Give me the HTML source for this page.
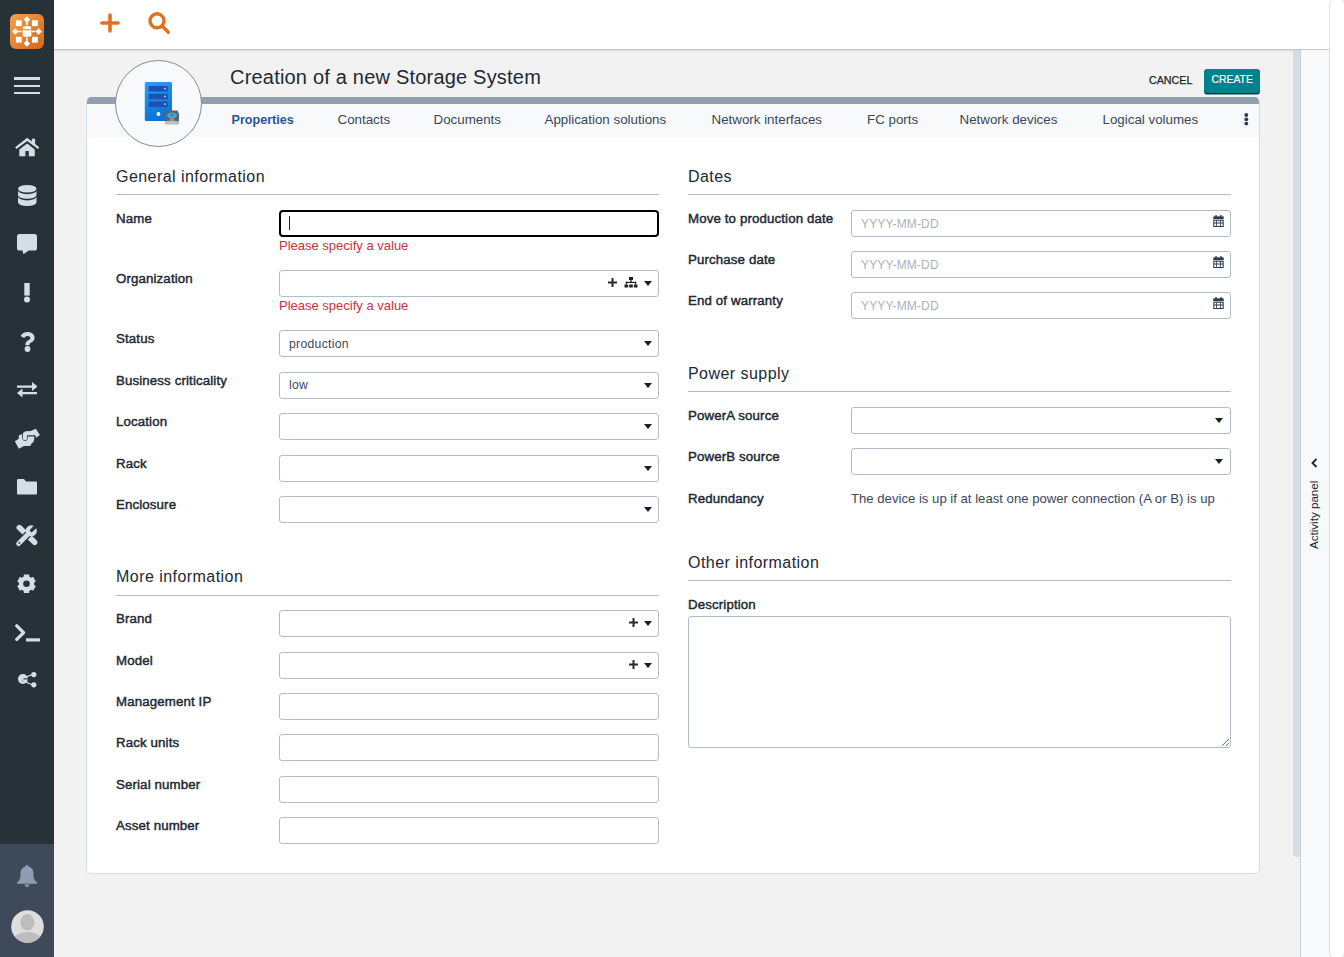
<!DOCTYPE html><html><head><meta charset="utf-8"><style>
*{box-sizing:border-box;margin:0;padding:0}
html,body{width:1344px;height:957px;overflow:hidden;background:#f2f2f2;font-family:"Liberation Sans",sans-serif;color:#212934}
.a{position:absolute}
.sb{left:0;top:0;width:54px;height:957px;background:#263238}
.sbb{left:0;top:844px;width:54px;height:113px;background:#3e4a59}
.top{left:54px;top:0;width:1276px;height:50px;background:#fff;border-bottom:1px solid #c4c4c4;box-shadow:0 1px 2px rgba(0,0,0,.10)}
.card{left:86px;top:97px;width:1174px;height:777px;background:#fff;border:1px solid #d6dde4;border-top:0;border-radius:5px;overflow:hidden}
.strip{left:0;top:0;width:100%;height:7px;background:#929fb1}
.tabbar{left:0;top:7px;width:100%;height:33px;background:#f8f9fa}
.circle{left:115px;top:60px;width:87px;height:87px;border-radius:50%;background:#f8f9fa;border:1px solid #7d8f99}
.title{left:230px;top:64px;font-size:20px;line-height:26px;color:#212934;letter-spacing:0.2px;white-space:nowrap}
.tab{top:112px;font-size:13.35px;line-height:16px;color:#39475a;white-space:nowrap}
.h{font-size:16px;letter-spacing:0.45px;line-height:20px;color:#212934;white-space:nowrap}
.hl{height:1px;background:#aebecd}
.lbl{font-size:13.25px;letter-spacing:0.14px;font-weight:normal;-webkit-text-stroke:0.45px #212934;line-height:16px;color:#212934;white-space:nowrap}
.inp{height:27px;background:#fff;border:1px solid #aebecd;border-radius:3px}
.err{font-size:13px;line-height:16px;color:#c8323c;white-space:nowrap}
.val{font-size:12.2px;letter-spacing:0.3px;line-height:16px;color:#3c4759;white-space:nowrap}
.ph{font-size:12px;letter-spacing:0.15px;line-height:16px;color:#aab1bb;white-space:nowrap}
.caret{width:0;height:0;border-left:4.5px solid transparent;border-right:4.5px solid transparent;border-top:5px solid #1b1f24}
</style></head><body><div class="a sb"></div>
<div class="a sbb"></div>
<svg class="a" style="left:10px;top:14px" width="34" height="35" viewBox="0 0 34 35">
<defs><linearGradient id="lg" x1="0" y1="0" x2="1" y2="1"><stop offset="0" stop-color="#f1a24c"/><stop offset="1" stop-color="#d5651e"/></linearGradient></defs>
<rect x="0" y="0" width="34" height="35" rx="6" fill="url(#lg)"/>
<g fill="#fff">
<path d="M16.85 2.2 L20.05 5.5 L16.85 8.8 L13.65 5.5 Z"/><rect x="16.1" y="8" width="1.5" height="3"/>
<path d="M16.85 26.1 L20.05 29.4 L16.85 32.7 L13.65 29.4 Z"/><rect x="16.1" y="23.5" width="1.5" height="3"/>
<path d="M2.15 17.5 L5.35 14.2 L8.55 17.5 L5.35 20.8 Z"/><rect x="8" y="16.8" width="3.5" height="1.4"/>
<path d="M31.8 17.5 L28.6 14.2 L25.4 17.5 L28.6 20.8 Z"/><rect x="22" y="16.8" width="3.5" height="1.4"/>
<rect x="5.9" y="6.3" width="5.8" height="5.8"/><rect x="22" y="6.3" width="5.8" height="5.8"/>
<rect x="5.9" y="22.8" width="5.8" height="5.8"/><rect x="22" y="22.8" width="5.8" height="5.8"/>
<ellipse cx="17.05" cy="13.7" rx="4.35" ry="1.6"/>
<path d="M12.7 15.6 Q17.05 17.5 21.4 15.6 V21.9 Q17.05 23.6 12.7 21.9 Z"/>
</g></svg>
<div class="a" style="left:14px;top:77px;width:26px;height:2.6px;background:#d5dde5"></div>
<div class="a" style="left:14px;top:84.7px;width:26px;height:2.4px;background:#d5dde5"></div>
<div class="a" style="left:14px;top:91.7px;width:26px;height:2.4px;background:#d5dde5"></div>
<svg class="a" style="left:0;top:131.2px" width="54" height="30" viewBox="0 130 54 30" fill="#d5dde5"><path d="M15.1 146.2 L27.2 136.8 L31.8 140.4 V137.8 H35.1 V143 L39.3 146.2 L37.9 148.1 L27.2 140.1 L16.5 148.1 Z"/><path d="M19.3 148.6 L27.2 142.4 L34.8 148.6 V155.2 H28.8 V150.1 H25.4 V155.2 H19.3 Z"/></svg>
<svg class="a" style="left:18px;top:185px" width="18.5" height="21" viewBox="0 0 18.5 21" fill="#d5dde5"><ellipse cx="9.25" cy="3.8" rx="9.25" ry="3.8"/><path d="M0 5.4 A9.25 3.8 0 0 0 18.5 5.4 V10 A9.25 3.8 0 0 1 0 10 Z"/><path d="M0 11.6 A9.25 3.8 0 0 0 18.5 11.6 V17.2 A9.25 3.8 0 0 1 0 17.2 Z"/></svg>
<svg class="a" style="left:17px;top:233.5px" width="20" height="20.5" viewBox="0 0 20 20.5" fill="#d5dde5"><path d="M2.5 0 H17.5 Q20 0 20 2.5 V14 Q20 16.6 17.5 16.6 H11.7 L6.4 20.3 L5.6 16.6 H2.5 Q0 16.6 0 14 V2.5 Q0 0 2.5 0 Z"/></svg>
<svg class="a" style="left:23px;top:283px" width="8" height="19.5" viewBox="0 0 8 19.5" fill="#d5dde5"><rect x="1.3" y="0" width="5.4" height="12.6"/><circle cx="4" cy="16.5" r="3"/></svg>
<svg class="a" style="left:20px;top:332px" width="15" height="20" viewBox="0 0 15 20" fill="#d5dde5"><path d="M7.5 0 C11.8 0 14.6 2.6 14.6 5.8 C14.6 8.6 12.6 9.8 10.8 10.8 C9.6 11.5 9.5 12 9.5 13.3 H5.4 C5.4 10.7 6 9.4 8.2 8.2 C9.8 7.3 10.4 6.9 10.4 5.9 C10.4 4.7 9.2 3.9 7.6 3.9 C6 3.9 5 4.7 4.2 6.1 L0.6 4 C2 1.4 4.4 0 7.5 0 Z"/><circle cx="7.5" cy="17" r="2.9"/></svg>
<svg class="a" style="left:16.5px;top:382px" width="20.5" height="15.5" viewBox="0 0 20.5 15.5" fill="#d5dde5"><path d="M0 3.4 H15 V0 L20.5 4.5 L15 9 V5.8 H0 Z"/><path d="M20.5 10 H5.5 V6.5 L0 11 L5.5 15.5 V12.3 H20.5 Z"/></svg>
<svg class="a" style="left:0;top:420px" width="54" height="35" viewBox="0 420 54 35" fill="#d5dde5"><path d="M22.97 433.09 L25.48 431.21 L30.81 430.9 L35.82 428.7 L39.9 434.97 L36.14 437.79 L35.2 435.29 L27.05 435.29 L27.05 439.05 Q26.3 440.3 25.17 440.3 Q23.4 440.3 22.97 439.05 Z"/><path d="M14.82 441.24 L18.58 439.05 L18.9 435.6 L22.03 434.03 L22.34 438.73 Q23.2 440.9 25.17 440.9 Q27.4 440.6 27.67 438.73 L27.67 436.54 L34.26 436.54 L34.26 439.36 L33.63 441.55 L31.44 443.75 L30.18 445.94 L23.91 445.94 L18.9 448.76 Z"/></svg>
<svg class="a" style="left:17px;top:479px" width="20" height="15.5" viewBox="0 0 20 15.5" fill="#d5dde5"><path d="M1 0 H7 L9 2.5 H19 Q20 2.5 20 3.5 V14.5 Q20 15.5 19 15.5 H1 Q0 15.5 0 14.5 V1 Q0 0 1 0 Z"/></svg>
<svg class="a" style="left:0;top:520px" width="54" height="30" viewBox="0 520 54 30"><g stroke-linecap="round" fill="none"><path d="M19.3 527.6 L34.6 542.3" stroke="#d5dde5" stroke-width="5.6"/><path d="M18.6 543.6 L30.2 532" stroke="#263238" stroke-width="7.4"/><path d="M18.6 543.6 L30.2 532" stroke="#d5dde5" stroke-width="4.8"/></g><circle cx="31.2" cy="530.9" r="5.6" fill="#d5dde5"/><path d="M31.6 530.4 L38.5 523.5" stroke="#263238" stroke-width="3.4" stroke-linecap="round"/><circle cx="19.3" cy="542.9" r="0.9" fill="#263238"/></svg>
<svg class="a" style="left:17.4px;top:573.75px" width="19" height="19.5" viewBox="0 0 19 19.5" fill="#d5dde5"><path fill-rule="evenodd" stroke="{ICON}" stroke-width="0.5" stroke-linejoin="round" d="M12.20 2.54 L12.20 0.54 L6.80 0.54 L6.80 2.54 L4.61 3.81 L2.87 2.81 L0.17 7.48 L1.91 8.48 L1.91 11.02 L0.17 12.02 L2.87 16.69 L4.61 15.69 L6.80 16.96 L6.80 18.96 L12.20 18.96 L12.20 16.96 L14.39 15.69 L16.13 16.69 L18.83 12.02 L17.09 11.02 L17.09 8.48 L18.83 7.48 L16.13 2.81 L14.39 3.81 Z M12.80 9.75 A3.3 3.3 0 1 0 6.20 9.75 A3.3 3.3 0 1 0 12.80 9.75 Z"/></svg>
<svg class="a" style="left:14.5px;top:623.5px" width="25.5" height="18" viewBox="0 0 25.5 18" fill="#d5dde5"><path d="M1.8 1.8 L8.6 8.6 L1.8 15.4" fill="none" stroke="#d5dde5" stroke-width="3.3" stroke-linecap="round" stroke-linejoin="round"/><rect x="11" y="14.3" width="14.5" height="3.2"/></svg>
<svg class="a" style="left:17.5px;top:672px" width="19" height="16" viewBox="0 0 19 16" fill="#d5dde5"><circle cx="4.9" cy="7" r="4.9"/><circle cx="15.8" cy="2.6" r="2.6"/><circle cx="15.8" cy="12.8" r="2.6"/><path d="M8 4.5 Q11 2.6 15 2.3 L15.3 3.3 Q11.5 3.6 8.8 5.5 Z M8.2 9.2 Q11.5 11.5 15 12.2 L14.8 13.2 Q11 12.6 7.8 10.5 Z"/><rect x="5.5" y="6.3" width="4.8" height="1.1" fill="#263238"/><rect x="3.2" y="7.6" width="2.8" height="2.6" fill="#aab4bd" opacity="0.6"/></svg>
<svg class="a" style="left:17px;top:864.6px" width="20" height="23" viewBox="0 0 20 23" fill="#8d9db2"><path d="M10 0 C11 0 11.5 0.8 11.5 1.6 C15 2.3 16.5 5.5 16.5 9 C16.5 13 17 15 20 17.5 V18.7 H0 V17.5 C3 15 3.5 13 3.5 9 C3.5 5.5 5 2.3 8.5 1.6 C8.5 0.8 9 0 10 0 Z"/><path d="M7 19.5 H13 L10 22.5 Z"/></svg>
<svg class="a" style="left:10.5px;top:910px" width="33" height="33" viewBox="0 0 33 33"><defs><clipPath id="av"><circle cx="16.5" cy="16.5" r="16.3"/></clipPath></defs><circle cx="16.5" cy="16.5" r="16.3" fill="#dedede"/><g clip-path="url(#av)" fill="#bdbdbd"><ellipse cx="16.4" cy="12.3" rx="6.9" ry="8.3"/><ellipse cx="16.5" cy="34" rx="16" ry="12"/></g></svg>
<div class="a top"></div>
<svg class="a" style="left:100px;top:12.6px" width="20" height="20" viewBox="0 0 20 20" stroke="#e0711d" stroke-width="3.6" stroke-linecap="round" fill="none"><path d="M10 2 V18 M1.9 10 H18.1"/></svg>
<svg class="a" style="left:147px;top:11px" width="24" height="24" viewBox="0 0 24 24" stroke="#e0711d" stroke-width="3.4" stroke-linecap="round" fill="none"><circle cx="10" cy="9.8" r="7"/><path d="M15.5 15.3 L21.3 21.2"/></svg>
<div class="a" style="left:1293px;top:50px;width:8px;height:807px;background:#d5dce5;border-radius:0 0 4px 4px"></div>
<div class="a" style="left:1300px;top:50px;width:30px;height:907px;background:#f8f9fa;border-left:1px solid #c8d1da"></div>
<div class="a" style="left:1329px;top:-2px;width:15.5px;height:961px;background:#fff;border:1px solid #e2e2e2;border-radius:7px"></div>
<svg class="a" style="left:1310px;top:457px" width="9" height="12" viewBox="0 0 9 12" fill="none" stroke="#1d2a3c" stroke-width="1.9"><path d="M6.5 2 L2.5 6 L6.5 10"/></svg>
<div class="a" style="left:1305px;top:506px;width:20px;height:14px;font-size:11px;line-height:14px;color:#212934;white-space:nowrap;transform-origin:0 0;transform:rotate(-90deg) translate(-40px,0);"></div>
<div class="a" style="left:1307px;top:549px;transform-origin:0 0;transform:rotate(-90deg);font-size:11.6px;line-height:14px;color:#212934;white-space:nowrap">Activity panel</div>
<div class="a card"><div class="a strip"></div><div class="a tabbar"></div></div>
<div class="a circle"></div>
<svg class="a" style="left:144px;top:81px" width="37" height="45" viewBox="0 0 37 45">
<defs><linearGradient id="sg" x1="0" y1="0" x2="0.3" y2="1"><stop offset="0" stop-color="#2aa0f5"/><stop offset="1" stop-color="#0b72d6"/></linearGradient></defs>
<rect x="0.8" y="1" width="27.2" height="39" rx="1.6" fill="url(#sg)"/>
<rect x="4.7" y="5" width="19" height="5.5" fill="#1f4fb3"/><rect x="4.7" y="12.8" width="19" height="5.5" fill="#1f4fb3"/><rect x="4.7" y="20.5" width="19" height="5.5" fill="#1f4fb3"/>
<circle cx="21" cy="7.7" r="0.9" fill="#9fe3ff"/><circle cx="21" cy="15.5" r="0.9" fill="#9fe3ff"/><circle cx="21" cy="23.2" r="0.9" fill="#9fe3ff"/>
<circle cx="14.4" cy="33" r="1.9" fill="#fff"/>
<path d="M22.5 29.5 H33.5 L35 33 V41 H21 V33 Z" fill="#5d646c"/>
<rect x="21" y="40" width="14" height="3.6" rx="0.6" fill="#b9c0c6"/>
<circle cx="33" cy="41.8" r="0.6" fill="#3ee040"/>
<ellipse cx="28" cy="34.5" rx="4.8" ry="2.8" fill="#2ab0ef"/><ellipse cx="28" cy="34.3" rx="1.6" ry="1" fill="#5d646c"/>
<path d="M27.3 35.5 L25.2 40 H30.8 L28.7 35.5 Z" fill="#8b9298"/>
</svg>
<div class="a title">Creation of a new Storage System</div>
<div class="a" style="left:1149px;top:72.6px;font-size:10.7px;-webkit-text-stroke:0.25px #1b1f24;line-height:14px;color:#1b1f24;white-space:nowrap">CANCEL</div>
<div class="a" style="left:1204px;top:69px;width:56px;height:24px;background:#00828e;border-radius:3px;box-shadow:0 1.5px 0 #0a3d42"></div>
<div class="a" style="left:1211.5px;top:73.4px;font-size:10.4px;-webkit-text-stroke:0.2px #fff;line-height:14px;color:#fff;white-space:nowrap">CREATE</div>
<div class="a tab" style="left:231.5px;font-weight:bold;color:#2a5593;font-size:12.6px;">Properties</div>
<div class="a tab" style="left:337.5px;">Contacts</div>
<div class="a tab" style="left:433.5px;">Documents</div>
<div class="a tab" style="left:544.5px;">Application solutions</div>
<div class="a tab" style="left:711.5px;">Network interfaces</div>
<div class="a tab" style="left:867px;">FC ports</div>
<div class="a tab" style="left:959.5px;">Network devices</div>
<div class="a tab" style="left:1102.5px;">Logical volumes</div>
<svg class="a" style="left:1243px;top:112px" width="6" height="15" viewBox="0 0 6 15" fill="#2c3a52"><circle cx="3.3" cy="3.0" r="1.9"/><circle cx="3.3" cy="7.3" r="1.9"/><circle cx="3.3" cy="11.6" r="1.9"/></svg>
<div class="a h" style="left:116px;top:167.3px">General information</div>
<div class="a hl" style="left:116px;top:194px;width:543px"></div>
<div class="a lbl" style="left:116px;top:211px">Name</div>
<div class="a" style="left:279px;top:210px;width:380px;height:27px;border:2.2px solid #000;border-radius:4px;background:#fff"></div>
<div class="a" style="left:289px;top:216px;width:1.3px;height:14px;background:#1f2733"></div>
<div class="a err" style="left:279px;top:237.5px">Please specify a value</div>
<div class="a lbl" style="left:116px;top:271px">Organization</div>
<div class="a inp" style="left:279px;top:270px;width:380px;height:27px;"></div>
<svg class="a" style="left:607.5px;top:277.5px" width="9" height="9" viewBox="0 0 9 9" stroke="#232b36" stroke-width="2" fill="none"><path d="M4.5 0 V9 M0 4.5 H9"/></svg>
<svg class="a" style="left:624px;top:277px" width="14" height="11" viewBox="0 0 14 11" fill="#1b1f24"><rect x="5" y="0" width="4" height="3"/><rect x="6.4" y="3" width="1.2" height="2.5"/><rect x="1.8" y="4.8" width="10.4" height="1.2"/><rect x="1.8" y="4.8" width="1.2" height="2.5"/><rect x="11" y="4.8" width="1.2" height="2.5"/><rect x="0.5" y="7.5" width="3.6" height="3"/><rect x="5.2" y="7.5" width="3.6" height="3"/><rect x="9.9" y="7.5" width="3.6" height="3"/></svg>
<div class="a caret" style="left:643.5px;top:281px"></div>
<div class="a err" style="left:279px;top:297.5px">Please specify a value</div>
<div class="a lbl" style="left:116px;top:331px">Status</div>
<div class="a inp" style="left:279px;top:330px;width:380px;height:27px;"></div>
<div class="a val" style="left:289px;top:336.3px">production</div>
<div class="a caret" style="left:643.5px;top:341px"></div>
<div class="a lbl" style="left:116px;top:373px">Business criticality</div>
<div class="a inp" style="left:279px;top:372px;width:380px;height:27px;"></div>
<div class="a val" style="left:289px;top:377.2px">low</div>
<div class="a caret" style="left:643.5px;top:383px"></div>
<div class="a lbl" style="left:116px;top:414px">Location</div>
<div class="a inp" style="left:279px;top:413px;width:380px;height:27px;"></div>
<div class="a caret" style="left:643.5px;top:424px"></div>
<div class="a lbl" style="left:116px;top:456px">Rack</div>
<div class="a inp" style="left:279px;top:455px;width:380px;height:27px;"></div>
<div class="a caret" style="left:643.5px;top:466px"></div>
<div class="a lbl" style="left:116px;top:497px">Enclosure</div>
<div class="a inp" style="left:279px;top:496px;width:380px;height:27px;"></div>
<div class="a caret" style="left:643.5px;top:507px"></div>
<div class="a h" style="left:116px;top:567.3px">More information</div>
<div class="a hl" style="left:116px;top:595px;width:543px"></div>
<div class="a lbl" style="left:116px;top:611px">Brand</div>
<div class="a inp" style="left:279px;top:610px;width:380px;height:27px;"></div>
<svg class="a" style="left:628.5px;top:617.5px" width="9" height="9" viewBox="0 0 9 9" stroke="#232b36" stroke-width="2" fill="none"><path d="M4.5 0 V9 M0 4.5 H9"/></svg>
<div class="a caret" style="left:643.5px;top:621px"></div>
<div class="a lbl" style="left:116px;top:653px">Model</div>
<div class="a inp" style="left:279px;top:652px;width:380px;height:27px;"></div>
<svg class="a" style="left:628.5px;top:659.5px" width="9" height="9" viewBox="0 0 9 9" stroke="#232b36" stroke-width="2" fill="none"><path d="M4.5 0 V9 M0 4.5 H9"/></svg>
<div class="a caret" style="left:643.5px;top:663px"></div>
<div class="a lbl" style="left:116px;top:694px">Management IP</div>
<div class="a inp" style="left:279px;top:693px;width:380px;height:27px;"></div>
<div class="a lbl" style="left:116px;top:735px">Rack units</div>
<div class="a inp" style="left:279px;top:734px;width:380px;height:27px;"></div>
<div class="a lbl" style="left:116px;top:777px">Serial number</div>
<div class="a inp" style="left:279px;top:776px;width:380px;height:27px;"></div>
<div class="a lbl" style="left:116px;top:818px">Asset number</div>
<div class="a inp" style="left:279px;top:817px;width:380px;height:27px;"></div>
<div class="a h" style="left:688px;top:167.3px">Dates</div>
<div class="a hl" style="left:688px;top:194px;width:543px"></div>
<div class="a lbl" style="left:688px;top:211px">Move to production date</div>
<div class="a inp" style="left:851px;top:210px;width:380px;height:27px;"></div>
<div class="a ph" style="left:861px;top:215.5px">YYYY-MM-DD</div>
<svg class="a" style="left:1212.5px;top:214.5px" width="11" height="12.5" viewBox="0 0 10 12" fill="#2c3a4c"><rect x="0" y="1.3" width="10" height="2.7"/><rect x="2" y="0" width="1.3" height="2.5"/><rect x="6.7" y="0" width="1.3" height="2.5"/><path fill-rule="evenodd" d="M0 4.6 H10 V11.5 H0 Z M1 5.6 V7.3 H2.8 V5.6 Z M3.6 5.6 V7.3 H6.4 V5.6 Z M7.2 5.6 V7.3 H9 V5.6 Z M1 8.1 V10.5 H2.8 V8.1 Z M3.6 8.1 V10.5 H6.4 V8.1 Z M7.2 8.1 V10.5 H9 V8.1 Z"/></svg>
<div class="a lbl" style="left:688px;top:252px">Purchase date</div>
<div class="a inp" style="left:851px;top:251px;width:380px;height:27px;"></div>
<div class="a ph" style="left:861px;top:256.5px">YYYY-MM-DD</div>
<svg class="a" style="left:1212.5px;top:255.5px" width="11" height="12.5" viewBox="0 0 10 12" fill="#2c3a4c"><rect x="0" y="1.3" width="10" height="2.7"/><rect x="2" y="0" width="1.3" height="2.5"/><rect x="6.7" y="0" width="1.3" height="2.5"/><path fill-rule="evenodd" d="M0 4.6 H10 V11.5 H0 Z M1 5.6 V7.3 H2.8 V5.6 Z M3.6 5.6 V7.3 H6.4 V5.6 Z M7.2 5.6 V7.3 H9 V5.6 Z M1 8.1 V10.5 H2.8 V8.1 Z M3.6 8.1 V10.5 H6.4 V8.1 Z M7.2 8.1 V10.5 H9 V8.1 Z"/></svg>
<div class="a lbl" style="left:688px;top:293px">End of warranty</div>
<div class="a inp" style="left:851px;top:292px;width:380px;height:27px;"></div>
<div class="a ph" style="left:861px;top:297.5px">YYYY-MM-DD</div>
<svg class="a" style="left:1212.5px;top:296.5px" width="11" height="12.5" viewBox="0 0 10 12" fill="#2c3a4c"><rect x="0" y="1.3" width="10" height="2.7"/><rect x="2" y="0" width="1.3" height="2.5"/><rect x="6.7" y="0" width="1.3" height="2.5"/><path fill-rule="evenodd" d="M0 4.6 H10 V11.5 H0 Z M1 5.6 V7.3 H2.8 V5.6 Z M3.6 5.6 V7.3 H6.4 V5.6 Z M7.2 5.6 V7.3 H9 V5.6 Z M1 8.1 V10.5 H2.8 V8.1 Z M3.6 8.1 V10.5 H6.4 V8.1 Z M7.2 8.1 V10.5 H9 V8.1 Z"/></svg>
<div class="a h" style="left:688px;top:364.3px">Power supply</div>
<div class="a hl" style="left:688px;top:391px;width:543px"></div>
<div class="a lbl" style="left:688px;top:408px">PowerA source</div>
<div class="a inp" style="left:851px;top:407px;width:380px;height:27px;"></div>
<div class="a caret" style="left:1214.5px;top:418px"></div>
<div class="a lbl" style="left:688px;top:449px">PowerB source</div>
<div class="a inp" style="left:851px;top:448px;width:380px;height:27px;"></div>
<div class="a caret" style="left:1214.5px;top:459px"></div>
<div class="a lbl" style="left:688px;top:491px">Redundancy</div>
<div class="a" style="left:851px;top:490.5px;font-size:13.15px;line-height:16px;color:#39475a;white-space:nowrap">The device is up if at least one power connection (A or B) is up</div>
<div class="a h" style="left:688px;top:553.3px">Other information</div>
<div class="a hl" style="left:688px;top:580px;width:543px"></div>
<div class="a lbl" style="left:688px;top:597px">Description</div>
<div class="a inp" style="left:688px;top:616px;width:543px;height:132px;"></div>
<svg class="a" style="left:1220px;top:737px" width="9" height="9" viewBox="0 0 9 9" stroke="#4f4f4f" stroke-width="0.9" stroke-linecap="round"><path d="M8.6 2.4 L2.4 8.4 M8.6 6.4 L6.4 8.4"/></svg></body></html>
